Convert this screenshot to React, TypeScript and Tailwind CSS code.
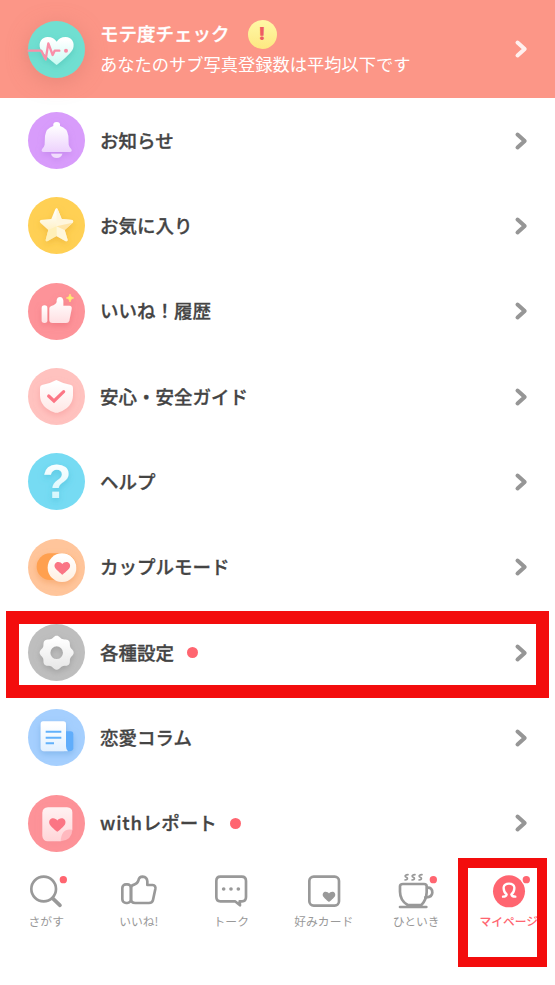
import React from 'react';

type Stop = [string, string];

function Gradient({ id, from, to }: { id: string; from: string; to: string }) {
  return (
    <linearGradient id={id} x1="0" y1="0" x2="0" y2="1">
      <stop offset="0.1" stopColor={from} />
      <stop offset="1" stopColor={to} />
    </linearGradient>
  );
}

function Disc({ id, color, fill, shadow, children }: { id: string; color: string; fill: Stop; shadow: string; children: React.ReactNode }) {
  return (
    <svg viewBox="0 0 171 171" className="h-[57px] w-[57px] shrink-0 overflow-visible">
      <defs>
        <Gradient id={id} from={fill[0]} to={fill[1]} />
        <filter id={id + '-shadow'} x="-40%" y="-40%" width="180%" height="190%">
          <feDropShadow dx="0" dy="8" stdDeviation="9" floodColor={shadow} floodOpacity="0.5" />
        </filter>
      </defs>
      <circle cx="85.5" cy="85.5" r="85.5" fill={color} />
      <g filter={`url(#${id}-shadow)`}>{children}</g>
    </svg>
  );
}

const HEART = 'M0 36 C-10 28 -43 1 -49 -13 C-56 -31 -44 -48 -27 -48 C-14 -48 -6 -42 0 -34 C6 -42 14 -48 27 -48 C44 -48 56 -31 49 -13 C43 1 10 28 0 36Z';

const GEAR = Array.from({ length: 96 }, (_, i) => {
  const angle = (i / 96) * Math.PI * 2;
  const radius = 47.5 + 3.5 * Math.cos(8 * angle);
  return `${i ? 'L' : 'M'}${(86 + radius * Math.cos(angle)).toFixed(1)} ${(86 + radius * Math.sin(angle)).toFixed(1)}`;
}).join('') + 'ZM86 67A19 19 0 1 0 86 105A19 19 0 1 0 86 67Z';

function PulseIcon() {
  return (
    <Disc id="pulse" color="#70dfd1" fill={['#ffffff', '#c9fbf3']} shadow="#45bdaf">
      <path d={HEART} transform="translate(86 96)" fill="url(#pulse)" />
      <path d="M2 89H40L53 115L61 67L74 102L80 89H94" fill="none" stroke="#f98fa8" strokeWidth="7" strokeLinejoin="round" strokeLinecap="round" />
      <circle cx="114" cy="89" r="6" fill="#f98fa8" />
    </Disc>
  );
}

function BellIcon() {
  return (
    <Disc id="bell" color="#d89cfb" fill={['#ffffff', '#edd2fd']} shadow="#b879e4">
      <path d="M76 42Q74 30 86 30Q98 30 96 42Q118 48 121 72L122 98Q124 106 129 110Q135 119 125 120H47Q37 119 43 110Q48 106 50 98L51 72Q54 48 76 42Z" fill="url(#bell)" />
      <path d="M69 125H103Q99 138 86 138Q73 138 69 125Z" fill="#f1ddfd" />
    </Disc>
  );
}

function StarIcon() {
  return (
    <Disc id="star" color="#ffd054" fill={['#fffefa', '#ffe9a8']} shadow="#e4a825">
      <path d="M82 37Q85.500 31 89 37L101 66L133 69Q138 72 134 77L110 99L119 129Q118 135 112 132L85.500 117L59 132Q53 135 53 129L61 99L37 77Q33 72 38 69L70 66Z" fill="url(#star)" />
      <path d="M85.500 34Q88 34 89 37L101 66L133 69Q138 72 134 77L85.500 88Z" fill="#fff6dc" />
      <path d="M85.500 88L110 99L119 129Q118 135 112 132L85.500 117Z" fill="#fff7da" />
      <path d="M85.500 88L61 99L53 129Q53 135 59 132L85.500 117Z" fill="#fff0b8" />
      <path d="M85.500 88L110 99L134 77Z" fill="#ffe5a8" />
    </Disc>
  );
}

function LikeIcon() {
  return (
    <Disc id="like" color="#fd9399" fill={['#ffffff', '#ffdfe2']} shadow="#e7626e">
      <rect x="41" y="67" width="17" height="53" rx="8" fill="url(#like)" />
      <path d="M64 76Q64 71 70 69Q84 65 86 57V52Q88 42 96 42Q105 43 106 53V68H124Q133 69 131 78L124 113Q122 120 114 120H74Q64 120 64 111Z" fill="url(#like)" />
      <path d="M126 33Q127 44 137 45Q127 46 126 57Q125 46 115 45Q125 44 126 33Z" fill="#fff06f" stroke="#fff06f" strokeWidth="2" />
    </Disc>
  );
}

function ShieldIcon() {
  return (
    <Disc id="shield" color="#ffc2bf" fill={['#ffffff', '#ffe7e5']} shadow="#f58f91">
      <path d="M85 36Q105 47 129 51Q135 53 135 60V82Q134 118 93 133Q85 136 78 133Q37 118 36 82V60Q36 53 42 51Q66 47 85 36Z" fill="url(#shield)" />
      <path d="M62 84L78 99L107 71" fill="none" stroke="#fc7685" strokeWidth="9.500" strokeLinecap="round" />
    </Disc>
  );
}

function HelpIcon() {
  return (
    <Disc id="help" color="#76dbf3" fill={['#ffffff', '#c8f4fc']} shadow="#3db6d2">
      <text x="0" y="0" transform="translate(86 136)" textAnchor="middle" fill="url(#help)" fontSize="144" fontWeight="700" className="font-['Liberation_Sans',sans-serif]">?</text>
    </Disc>
  );
}

function CoupleIcon() {
  return (
    <Disc id="couple" color="#ffc59b" fill={['#ffffff', '#ffefe0']} shadow="#f19450">
      <rect x="26" y="43" width="119" height="80" rx="40" fill="#ffa04f" />
      <circle cx="102" cy="86" r="43" fill="url(#couple)" />
      <path d={HEART} transform="translate(103 91) scale(.46)" fill="#fa7584" />
    </Disc>
  );
}

function GearIcon() {
  return (
    <Disc id="gear" color="#bebebe" fill={['#ffffff', '#e6e6e6']} shadow="#858585">
      <path fillRule="evenodd" d={GEAR} fill="url(#gear)" />
    </Disc>
  );
}

function ColumnIcon() {
  return (
    <Disc id="column" color="#a5cffe" fill={['#ffffff', '#e1f0ff']} shadow="#619edb">
      <path d="M112 67H128Q136 67 136 76V118Q135 127 124 127H108Z" fill="#60adfb" />
      <path d="M45 37H106Q114 37 114 45V112Q114 122 120 127H48Q38 126 38 116V45Q38 37 45 37Z" fill="url(#column)" />
      <path d="M53 68H100M53 86H100M53 103H78" stroke="#62b1fb" strokeWidth="6" />
    </Disc>
  );
}

function ReportIcon() {
  return (
    <Disc id="report" color="#fd9298" fill={['#ffeff0', '#ffd5d8']} shadow="#f58a92">
      <path d="M60 37H117Q133 38 133 53V105L98 139H60Q44 138 43 122V53Q44 38 60 37Z" fill="url(#report)" />
      <path d={HEART} transform="translate(88 93) scale(.48)" fill="#fb7584" />
      <path d="M133 104Q100 98 98 139Q132 135 133 104Z" fill="#ffb9bf" />
    </Disc>
  );
}

function Chevron({ className }: { className: string }) {
  return (
    <svg viewBox="0 0 14 20" className={`h-5 w-3.5 shrink-0 ${className}`} fill="none" stroke="currentColor" strokeWidth="4" strokeLinecap="round" strokeLinejoin="round">
      <path d="M3.500 3.500L10.700 10L3.500 16.500" />
    </svg>
  );
}

const ROWS: { label: React.ReactNode; icon: React.ReactNode; dot?: boolean }[] = [
  { label: 'お知らせ', icon: <BellIcon /> },
  { label: 'お気に入り', icon: <StarIcon /> },
  { label: 'いいね！履歴', icon: <LikeIcon /> },
  { label: '安心・安全ガイド', icon: <ShieldIcon /> },
  { label: 'ヘルプ', icon: <HelpIcon /> },
  { label: 'カップルモード', icon: <CoupleIcon /> },
  { label: '各種設定', icon: <GearIcon />, dot: true },
  { label: '恋愛コラム', icon: <ColumnIcon /> },
  { label: <><span className="tracking-[0.8px]">with</span>レポート</>, icon: <ReportIcon />, dot: true },
];

function TabSvg({ children }: { children: React.ReactNode }) {
  return (
    <svg viewBox="0 0 120 120" className="h-10 w-10 shrink-0 overflow-visible" fill="none" stroke="currentColor" strokeWidth="8" strokeLinecap="round" strokeLinejoin="round">
      {children}
    </svg>
  );
}

const TABS: { label: string; icon: React.ReactNode; active?: boolean }[] = [
  {
    label: 'さがす',
    icon: (
      <TabSvg>
        <circle cx="53" cy="57" r="37" />
        <path d="M81 86L102 106" strokeWidth="11" />
        <circle cx="112" cy="29" r="11" fill="#ff6570" stroke="none" />
      </TabSvg>
    ),
  },
  {
    label: 'いいね!',
    icon: (
      <TabSvg>
        <rect x="10" y="43" width="26" height="56" rx="11" />
        <path d="M36 54Q36 46 45 44Q56 40 58 32Q60 20 71 20Q84 21 85 34V45H101Q111 46 109 57L102 90Q100 99 90 99H49Q36 99 36 87Z" />
      </TabSvg>
    ),
  },
  {
    label: 'トーク',
    icon: (
      <TabSvg>
        <path d="M28 20H92Q105 20 105 33V81Q105 94 93 94H86L87 106L72 94H28Q16 94 16 81V33Q16 20 28 20Z" />
        <g fill="currentColor" stroke="none">
          <circle cx="38" cy="57" r="5.500" />
          <circle cx="60" cy="57" r="5.500" />
          <circle cx="82" cy="57" r="5.500" />
        </g>
      </TabSvg>
    ),
  },
  {
    label: '好みカード',
    icon: (
      <TabSvg>
        <rect x="16" y="20" width="89" height="87" rx="13" />
        <path d={HEART} transform="translate(75 83) scale(.37)" fill="currentColor" stroke="none" />
      </TabSvg>
    ),
  },
  {
    label: 'ひといき',
    icon: (
      <TabSvg>
        <path d="M21 42H84Q92 42 92 49V67Q91 90 76 105H35Q12 91 12 65V49Q12 42 21 42Z" />
        <path d="M94 53Q109 52 109 68Q108 83 88 82M12 111H91" />
        <path d="M36 14Q25 15 28 20L34 24Q36 29 27 30M57 14Q46 15 49 20L55 24Q57 29 48 30M78 14Q67 15 70 20L76 24Q78 29 69 30" strokeWidth="5" />
        <circle cx="112" cy="29" r="11" fill="#ff6570" stroke="none" />
      </TabSvg>
    ),
  },
  {
    label: 'マイページ',
    active: true,
    icon: (
      <TabSvg>
        <circle cx="60" cy="64" r="48" fill="currentColor" stroke="none" />
        <path d="M42 80Q52 80 53 73Q43 65 44 52Q46 41 60 41Q74 41 76 52Q77 65 67 73Q69 80 79 80" stroke="white" strokeWidth="7" />
        <circle cx="112" cy="29" r="15" fill="white" stroke="none" />
        <circle cx="112" cy="29" r="11" fill="#ff6570" stroke="none" />
      </TabSvg>
    ),
  },
];

export default function App() {
  return (
    <div className="relative flex h-[985px] w-[555px] flex-col overflow-hidden bg-white font-['Noto_Sans_CJK_JP',sans-serif] text-[#444444]">
      <header className="flex h-[98px] shrink-0 items-center bg-[#fc9687] pr-[27px] pl-7 text-white">
        <div className="rounded-full shadow-[0_4px_20px_#d7786c80]">
          <PulseIcon />
        </div>
        <div className="ml-[15px] flex flex-1 flex-col whitespace-nowrap">
          <div className="flex h-[30px] items-center">
            <span className="text-[18.500px] font-medium [-webkit-text-stroke:0.3px]">モテ度チェック</span>
            <span className="ml-[18px] flex h-[29px] w-[29px] items-center justify-center rounded-full bg-linear-to-b from-[#fff8a6] to-[#fde881] font-['Inter',sans-serif] text-lg font-black text-[#ee5d63]">!</span>
          </div>
          <span className="h-[30px] text-[17.250px] leading-[30px]">あなたのサブ写真登録数は平均以下です</span>
        </div>
        <Chevron className="text-[#fff0ee]" />
      </header>

      <main className="flex shrink-0 flex-col">
        {ROWS.map((row, i) => (
          <div key={i} className="flex h-[85.330px] items-center pr-[27px] pl-7">
            {row.icon}
            <span className="ml-[15px] text-[18.500px] font-medium whitespace-nowrap [-webkit-text-stroke:0.3px]">{row.label}</span>
            {row.dot && <span className="ml-[13px] h-[11px] w-[11px] rounded-full bg-[#ff6570]" />}
            <Chevron className="ml-auto text-[#969696]" />
          </div>
        ))}
      </main>

      <nav className="grid shrink-0 grid-cols-6 pt-1">
        {TABS.map((tab) => (
          <div key={tab.label} className={`flex flex-col items-center ${tab.active ? 'text-[#ff6570]' : 'text-[#999999]'}`}>
            {tab.icon}
            <span className={`mt-px text-[11.800px] leading-5 whitespace-nowrap ${tab.active ? 'font-medium' : ''}`}>{tab.label}</span>
          </div>
        ))}
      </nav>

      <div className="absolute top-[611px] left-[6px] h-[87px] w-[543px] border-[13px] border-[#f30d0d]" />
      <div className="absolute top-[858px] left-[458px] h-[109px] w-[89px] border-[10px] border-[#f30d0d]" />
    </div>
  );
}
